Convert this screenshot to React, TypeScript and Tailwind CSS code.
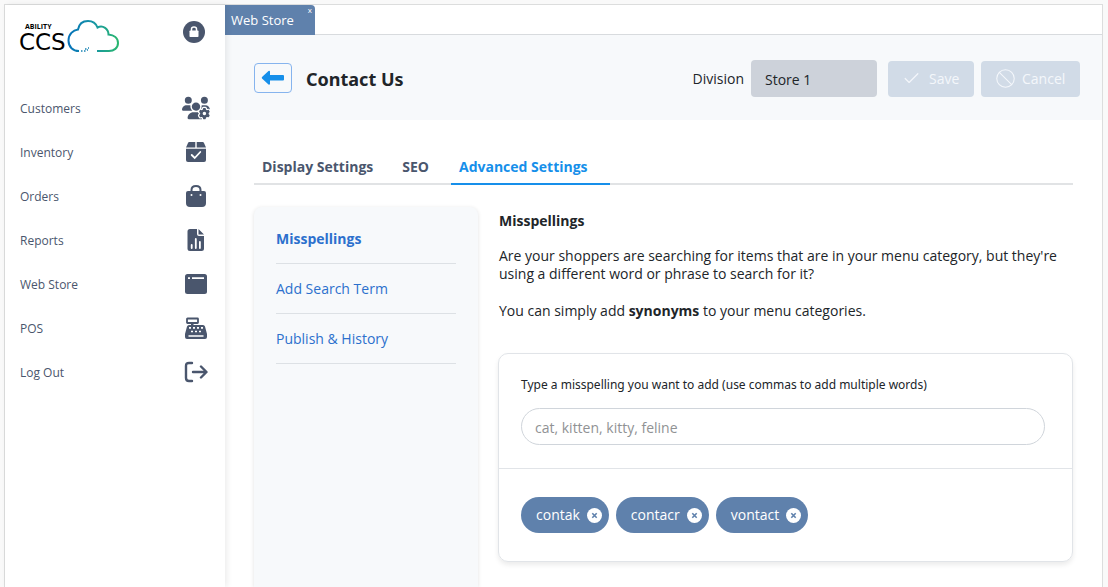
import React, { useState } from "react";
import { FaUsersGear } from "react-icons/fa6";
import { Ban, Check } from "lucide-react";

function Logo() {
  return (
    <div className="flex items-end">
      <div className="flex flex-col text-black">
        <span className="pl-1.5 font-['Open_Sans',sans-serif] text-[7px] font-bold leading-[8px]">
          ABILITY
        </span>
        <span className="font-['DejaVu_Sans',sans-serif] text-[23px] leading-[22px]">CCS</span>
      </div>
      <svg width="52" height="34" viewBox="0 0 52 34" fill="none" strokeWidth="2" className="ml-px">
        <defs>
          <linearGradient id="cloud" x1="0" y1="0" x2="1" y2="0">
            <stop offset="0" stopColor="#0672b9" />
            <stop offset="0.5" stopColor="#1795a5" />
            <stop offset="1" stopColor="#29b66f" />
          </linearGradient>
        </defs>
        <path
          d="M12 32C6 32 1.500 28 1.500 21.500C1.500 15.500 6 11 11 10.500C12 5 16 2 21 2C25.500 2 29 4.500 30.500 8.500C36 5.500 41.500 10 41.500 15.500C47 16 51 19 51 24C51 29 47 32 42 32H30"
          stroke="url(#cloud)"
        />
        <path d="M14 32h1.500M17 32h1.500M18 30h1.500M20 31h1M21 29h1" stroke="#1682b4" strokeWidth="1.500" />
      </svg>
    </div>
  );
}

function BoxIcon() {
  return (
    <svg width="22" height="22" viewBox="0 0 22 22" fill="currentColor">
      <path d="M4.200 1H10.300V6.500H1L3 2Q3.400 1 4.200 1ZM11.700 1H17.800Q18.600 1 19 2L21 6.500H11.700Z" />
      <path d="M1 7.800H21V19Q21 21 19 21H3Q1 21 1 19Z" />
      <path d="m6.700 14 3 3 5.600-6" fill="none" stroke="white" strokeWidth="1.800" strokeLinecap="round" />
    </svg>
  );
}

function BagIcon() {
  return (
    <svg width="22" height="24" viewBox="0 0 22 24">
      <path d="M6.500 11V6Q6.500 2 11 2T15.500 6V11" fill="none" stroke="currentColor" strokeWidth="2" />
      <path d="M3 7H19Q21 7 21 9V19Q21 23 17 23H5Q1 23 1 19V9Q1 7 3 7Z" fill="currentColor" />
      <circle cx="6.500" cy="11" r="1" fill="white" />
      <circle cx="15.500" cy="11" r="1" fill="white" />
    </svg>
  );
}

function ReportIcon() {
  return (
    <svg width="22" height="24" viewBox="0 0 22 24">
      <path
        d="M5 1H12V6Q12 8 14 8H19V20.500Q19 23 16.500 23H5Q2.500 23 2.500 20.500V3.500Q2.500 1 5 1ZM13.500 1L19 6.500H13.500Z"
        fill="currentColor"
      />
      <path d="M6.700 20V17M10.800 20V11M14.900 20V14" stroke="white" strokeWidth="1.800" strokeLinecap="round" />
    </svg>
  );
}

function WindowIcon() {
  return (
    <svg width="22" height="20" viewBox="0 0 22 20">
      <rect width="22" height="20" rx="2.500" fill="currentColor" />
      <path d="M3 4.200H5M7 4.200H19" stroke="white" strokeWidth="1.800" />
    </svg>
  );
}

function RegisterIcon() {
  return (
    <svg width="22" height="23" viewBox="0 0 22 23">
      <rect x="2" y="1.500" width="11" height="4.500" rx="0.500" fill="white" stroke="currentColor" strokeWidth="1.800" />
      <path
        d="M6 6H8.500V8H18Q19.500 8 20 9.500L22 17V20Q22 22 20 22H2Q0 22 0 20V17L2 9.500Q2.500 8 4 8H6Z"
        fill="currentColor"
      />
      <path
        d="M4 10.800h2M8 10.800h2M12 10.800h2M16 10.800h2M6 14.500h2M10 14.500h2M14 14.500h2M3.500 19h15"
        stroke="white"
        strokeWidth="1.700"
      />
    </svg>
  );
}

function LogoutIcon() {
  return (
    <svg
      width="24"
      height="22"
      viewBox="0 0 24 22"
      fill="none"
      stroke="currentColor"
      strokeWidth="2.400"
      strokeLinecap="round"
      strokeLinejoin="round"
    >
      <path d="M8 2H5Q2 2 2 5V17Q2 20 5 20H8M9 11H22M17 5.500L22.500 11L17 16.500" />
    </svg>
  );
}

const menu = [
  { label: "Customers", icon: <FaUsersGear size={28} /> },
  { label: "Inventory", icon: <BoxIcon /> },
  { label: "Orders", icon: <BagIcon /> },
  { label: "Reports", icon: <ReportIcon /> },
  { label: "Web Store", icon: <WindowIcon /> },
  { label: "POS", icon: <RegisterIcon /> },
  { label: "Log Out", icon: <LogoutIcon /> },
];

function Sidebar() {
  return (
    <aside className="z-10 flex w-[220px] shrink-0 flex-col bg-white text-[#4a566d] shadow-[2px_0_6px_rgba(0,0,0,0.08)]">
      <div className="flex h-[49px] items-start justify-between pl-3.5 pr-5 pt-3.5">
        <Logo />
        <button type="button" aria-label="Lock" className="mt-0.5">
          <svg width="22" height="22" viewBox="0 0 22 22">
            <circle cx="11" cy="11" r="11" fill="currentColor" />
            <rect x="6.500" y="9.500" width="9" height="6.500" rx="0.800" fill="white" />
            <path d="M8.500 10V8Q8.500 6 11 6T13.500 8V10" fill="none" stroke="white" strokeWidth="1.500" />
          </svg>
        </button>
      </div>
      <nav className="mt-8 flex flex-col">
        {menu.map((item) => (
          <a
            key={item.label}
            href="#"
            className="flex h-11 items-center justify-between pl-[15px] pr-[15px] text-[12px]"
          >
            <span className="pt-0.5">{item.label}</span>
            <span className="flex w-7 justify-center">{item.icon}</span>
          </a>
        ))}
      </nav>
    </aside>
  );
}

function Header() {
  return (
    <header className="flex h-[85px] items-center bg-[#f7f9fb] pl-[29px] pr-[22px] pt-0.5">
      <button
        type="button"
        aria-label="Back"
        className="mb-0.5 flex h-[30px] w-[38px] items-center justify-center rounded border border-[#86b4ee] text-[#168fea]"
      >
        <svg width="24" height="16" viewBox="0 0 24 16" fill="currentColor">
          <path d="M9 1.500V5H22Q23 5 23 6V9.500Q23 10.500 22 10.500H9V14Q8.500 15 7.500 14.500L1 8.500Q.5 7.800 1 7L7.500 1Q8.700.5 9 1.500Z" />
        </svg>
      </button>
      <h1 className="ml-3.5 font-['Noto_Sans',sans-serif] text-[18px] font-bold">Contact Us</h1>
      <label htmlFor="division" className="ml-auto mr-[7px]">
        Division
      </label>
      <select
        id="division"
        className="h-[37px] w-[126px] appearance-none rounded bg-[#cdd2da] px-3.5 pt-0.5 text-[#212529]"
      >
        <option>Store 1</option>
      </select>
      <button
        type="button"
        disabled
        className="ml-[11px] flex h-9 w-[86px] items-center gap-2 rounded bg-[#d1dbe7] pl-3.5 text-[#f4f7fb]"
      >
        <Check size={19} strokeWidth={1.5} />
        Save
      </button>
      <button
        type="button"
        disabled
        className="ml-[7px] flex h-9 w-[99px] items-center gap-1.5 rounded bg-[#d1dbe7] pl-3.5 text-[#f4f7fb]"
      >
        <Ban size={21} strokeWidth={1.2} />
        Cancel
      </button>
    </header>
  );
}

function Tabs() {
  return (
    <nav className="flex h-[35px] border-b-2 border-[#e1e3e5] font-bold text-[#4a566d]">
      <a href="#" className="pl-2 pr-[29px] pt-[7px]">
        Display Settings
      </a>
      <a href="#" className="pr-[22px] pt-[7px]">
        SEO
      </a>
      <a href="#" className="-mb-0.5 border-b-2 border-[#168fea] pl-2 pr-[22px] pt-[7px] text-[#168fea]">
        Advanced Settings
      </a>
    </nav>
  );
}

function Misspellings() {
  const [words, setWords] = useState(["contak", "contacr", "vontact"]);

  return (
    <section className="min-w-0 flex-1 pt-1">
      <h2 className="font-bold">Misspellings</h2>
      <p className="mt-4 leading-[18px]">
        Are your shoppers are searching for items that are in your menu category, but they're using a
        different word or phrase to search for it?
      </p>
      <p className="mt-[19px] leading-[18px]">
        You can simply add <strong>synonyms</strong> to your menu categories.
      </p>
      <div className="-ml-px mt-[33px] rounded-[10px] border border-[#e1e4e8] shadow-[0_3px_5px_rgba(0,0,0,0.08)]">
        <div className="h-[115px] border-b border-[#e1e4e8] pl-[22px] pr-[27px] pt-[21px]">
          <label
            htmlFor="misspelling"
            className="block font-['Noto_Sans',sans-serif] text-[12px] leading-5"
          >
            Type a misspelling you want to add (use commas to add multiple words)
          </label>
          <input
            id="misspelling"
            type="text"
            placeholder="cat, kitten, kitty, feline"
            className="mt-[13px] h-[37px] w-full rounded-full border border-[#d0d5db] px-[13px] pt-0.5 placeholder:text-[#909294]"
          />
        </div>
        <div className="flex h-[92px] items-center gap-[7px] px-[22px]">
          {words.map((word) => (
            <span
              key={word}
              className="flex h-9 items-center gap-[7px] rounded-full bg-[#5f81ac] pl-[15px] pr-[7px] text-white"
            >
              {word}
              <button
                type="button"
                aria-label={`Remove ${word}`}
                onClick={() => setWords(words.filter((w) => w !== word))}
              >
                <svg width="15" height="15" viewBox="0 0 15 15">
                  <circle cx="7.500" cy="7.500" r="7.500" fill="white" />
                  <path d="m5.300 5.300 4.400 4.400m0-4.400-4.400 4.400" stroke="#5f81ac" strokeWidth="1.600" />
                </svg>
              </button>
            </span>
          ))}
        </div>
      </div>
    </section>
  );
}

export default function App() {
  return (
    <div className="h-screen overflow-hidden bg-[#f9f9f9] pl-1 pr-[5px] pt-1 font-['Open_Sans',sans-serif] text-[14px] leading-5 text-[#212529]">
      <div className="flex h-full border-x border-t border-[#dcdddd] bg-white">
        <Sidebar />
        <main className="flex min-w-0 flex-1 flex-col">
          <div className="flex h-[30px] shrink-0 border-b border-[#d8dbde]">
            <div className="flex h-[30px] w-[90px] items-start justify-between rounded-tr bg-[#5f81ac] pl-1.5 pr-[3px] text-[13px] text-white">
              <a href="#" className="pt-[5px]">
                Web Store
              </a>
              <button type="button" aria-label="Close tab" className="text-[8px] leading-[10px]">
                x
              </button>
            </div>
          </div>
          <Header />
          <div className="flex flex-1 flex-col pl-[29px] pr-[29px] pt-[30px]">
            <Tabs />
            <div className="mt-[22px] flex flex-1 gap-[21px]">
              <nav className="flex w-56 shrink-0 flex-col rounded-t-lg bg-[#f7f9fb] px-[22px] pt-2 text-[#2c70cd] shadow-[0_1px_4px_rgba(0,0,0,0.12)]">
                <a href="#" className="flex h-[49px] items-center border-b border-[#dde1e5] font-bold">
                  Misspellings
                </a>
                <a href="#" className="flex h-[50px] items-center border-b border-[#dde1e5]">
                  Add Search Term
                </a>
                <a href="#" className="flex h-[50px] items-center border-b border-[#dde1e5]">
                  Publish &amp; History
                </a>
              </nav>
              <Misspellings />
            </div>
          </div>
        </main>
      </div>
    </div>
  );
}
